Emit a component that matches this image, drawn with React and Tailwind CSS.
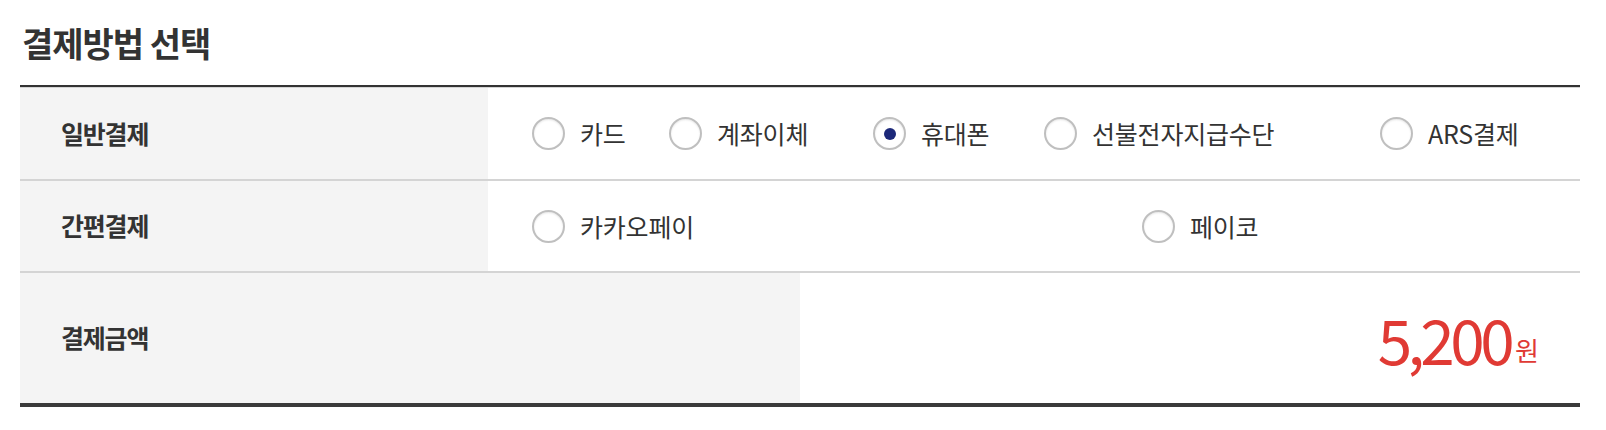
import React from "react";

const font = { fontFamily: '"Noto Sans CJK KR", "Noto Sans", sans-serif' };

function Radio({ checked }) {
  return (
    <span className="relative flex h-[33px] w-[33px] shrink-0 items-center justify-center rounded-full border-2 border-[#bfbfbf] bg-white shadow-[inset_0_1px_2px_rgba(0,0,0,0.1)]">
      {checked && <span className="h-[12px] w-[12px] rounded-full bg-[#1c2879]" />}
    </span>
  );
}

function Option({ label, checked, w }) {
  return (
    <label className={`flex items-center gap-[15px] ${w}`}>
      <Radio checked={checked} />
      <span className="text-[25px] leading-none tracking-[-0.2px] text-[#333]">{label}</span>
    </label>
  );
}

export default function App() {
  return (
    <div className="h-[430px] w-[1606px] bg-white px-[20px] pr-[26px]" style={font}>
      <h2 className="flex h-[85px] items-center pl-[2px] text-[34px] font-bold tracking-[-1px] text-[#333]">
        결제방법 선택
      </h2>
      <div className="border-t-2 border-[#333]">
        <div className="border-t border-[#d4d4d4]" />
        <div className="grid h-[93px] grid-cols-[468px_1fr] border-b-2 border-[#d4d4d4]">
          <div className="flex items-center bg-[#f4f4f4] pl-[41px] text-[25px] font-bold tracking-[-1.2px] text-[#333]">
            일반결제
          </div>
          <div className="flex items-center pl-[44px]">
            <Option label="카드" w="w-[137px]" />
            <Option label="계좌이체" w="w-[204px]" />
            <Option label="휴대폰" checked w="w-[171px]" />
            <Option label="선불전자지급수단" w="w-[336px]" />
            <Option label="ARS결제" w="w-[160px]" />
          </div>
        </div>
        <div className="grid h-[92px] grid-cols-[468px_1fr] border-b-2 border-[#d4d4d4]">
          <div className="flex items-center bg-[#f4f4f4] pl-[41px] text-[25px] font-bold tracking-[-1.2px] text-[#333]">
            간편결제
          </div>
          <div className="flex items-center pl-[44px]">
            <Option label="카카오페이" w="w-[610px]" />
            <Option label="페이코" w="w-[200px]" />
          </div>
        </div>
        <div className="grid h-[134px] grid-cols-[780px_1fr] border-b-4 border-[#3a3a3a]">
          <div className="flex items-center bg-[#f4f4f4] pl-[41px] text-[25px] font-bold tracking-[-1.2px] text-[#333]">
            결제금액
          </div>
          <div className="flex items-center justify-end pr-[42px] pt-[0px] text-[#e03a34]">
            <span className="text-[62px] leading-none tracking-[-4.5px]">5,200</span>
            <span className="ml-[5px] self-center pt-[24px] text-[26px] leading-none tracking-[-1px]">원</span>
          </div>
        </div>
      </div>
    </div>
  );
}
